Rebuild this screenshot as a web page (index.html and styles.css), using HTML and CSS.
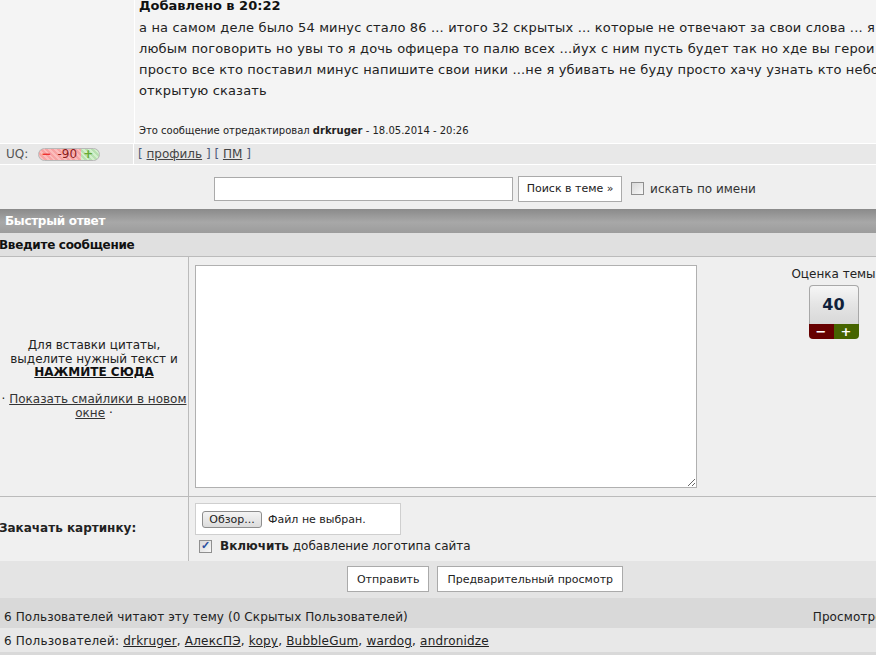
FILE: index.html
```html
<!DOCTYPE html>
<html lang="ru">
<head>
  <meta charset="UTF-8">
  <meta name="viewport" content="width=device-width, initial-scale=1.0">
  <title>Форум — тема</title>
  <link rel="stylesheet" href="styles.css">
</head>
<body>
<div class="page">

  <!-- Last post of the topic -->
  <div class="post">
    <div class="post-side"></div>
    <div class="post-body">
      <div class="post-added">Добавлено в 20:22</div>
      <div class="post-text">
        а на самом деле было 54 минус стало 86 ... итого 32 скрытых ... которые не отвечают за свои слова ... я готова с<br>
        любым поговорить но увы то я дочь офицера то палю всех ...йух с ним пусть будет так но хде вы герои клавиатуры<br>
        просто все кто поставил минус напишите свои ники ...не я убивать не буду просто хачу узнать кто небоится в<br>
        открытую сказать
      </div>
      <div class="post-edit">Это сообщение отредактировал <b>drkruger</b> - 18.05.2014 - 20:26</div>
    </div>
  </div>
  <div class="post-foot">
    <div class="post-side uq-cell">
      UQ:
      <span class="uq"><span class="uq-minus">&minus;</span><span class="uq-val">-90</span><span class="uq-plus">+</span></span>
    </div>
    <div class="post-links"><span>[ <a href="#">профиль</a> ] [ <a href="#">ПМ</a> ]</span></div>
  </div>

  <!-- Search inside topic -->
  <form class="search">
    <input type="text" class="search-input">
    <button type="button" class="btn search-btn">Поиск в теме &raquo;</button>
    <label class="search-check"><input type="checkbox" class="chk"> искать по имени</label>
  </form>

  <!-- Quick reply -->
  <div class="qr">
    <div class="qr-head">Быстрый ответ</div>
    <div class="qr-title">Введите сообщение</div>

    <div class="qr-row">
      <div class="qr-left">
        Для вставки цитаты,<br>
        выделите нужный текст и<br>
        <a href="#" class="quote-link">НАЖМИТЕ СЮДА</a><br><br>
        &middot; <a href="#">Показать смайлики в новом окне</a> &middot;
      </div>
      <div class="qr-main">
        <textarea class="qr-text"></textarea>
        <div class="rate">
          <div class="rate-label">Оценка темы</div>
          <div class="rate-box">
            <div class="rate-num">40</div>
            <div class="rate-btns"><span class="rate-down">&minus;</span><span class="rate-up">+</span></div>
          </div>
        </div>
      </div>
    </div>

    <div class="qr-row upload-row">
      <div class="qr-left upload-label">Закачать картинку:</div>
      <div class="qr-main upload">
        <div class="file-box">
          <span class="file-btn">Обзор...</span>
          <span class="file-name">Файл не выбран.</span>
        </div>
        <label class="logo-check"><input type="checkbox" class="chk" checked> <span><b>Включить</b> добавление логотипа сайта</span></label>
      </div>
    </div>

    <div class="qr-submit">
      <button type="button" class="btn">Отправить</button>
      <button type="button" class="btn">Предварительный просмотр</button>
    </div>
  </div>

  <!-- Who is reading -->
  <div class="stats-head">
    <span>6 Пользователей читают эту тему (0 Скрытых Пользователей)</span>
    <span>Просмотров темы: 2341</span>
  </div>
  <div class="stats-users">
    6 Пользователей: <a href="#">drkruger</a>, <a href="#">АлексПЭ</a>, <a href="#">kopy</a>, <a href="#">BubbleGum</a>, <a href="#">wardog</a>, <a href="#">andronidze</a>
  </div>
  <div class="stats-foot"></div>

</div>
</body>
</html>
```

FILE: styles.css
```css
body {
  margin: 0;
  background: #efefef;
  font-family: "DejaVu Sans", Verdana, sans-serif;
  font-size: 12px;
  color: #222;
  overflow: hidden;
}

a { color: #333; }

.page {
  width: 970px;
  margin-top: -2px;
}

/* old-style checkbox */
.chk {
  appearance: none;
  -webkit-appearance: none;
  position: relative;
  width: 13px;
  height: 13px;
  margin: 0;
  border: 1px solid #8f8f8f;
  background: linear-gradient(135deg, #d8d8d8, #f8f8f8);
  box-sizing: border-box;
  flex-shrink: 0;
}
.chk:checked::after {
  content: "\2713";
  position: absolute;
  left: 1px;
  top: -2px;
  font-size: 11px;
  font-weight: bold;
  color: #2b4fa0;
}

/* ---- post ---- */
.post {
  display: flex;
  background: #f4f4f4;
}
.post-side {
  width: 134px;
  flex-shrink: 0;
  border-right: 1px solid #fff;
}
.post-body {
  padding-left: 4px;
  flex: 1;
}
.post-added {
  font-weight: bold;
  font-size: 13px;
  line-height: 16px;
  color: #111;
}
.post-text {
  margin-top: 3px;
  font-size: 13px;
  line-height: 21px;
  white-space: nowrap;
  letter-spacing: 0.16px;
  color: #222;
}
.post-edit {
  margin-top: 23px;
  font-size: 10px;
  line-height: 14px;
  padding-bottom: 5px;
}

.post-foot {
  display: flex;
  background: #e8e8e8;
  border-top: 1px solid #fff;
  border-bottom: 1px solid #fff;
  height: 20px;
}
.uq-cell {
  display: flex;
  align-items: center;
  padding-left: 6px;
  box-sizing: border-box;
  color: #555;
  font-size: 12px;
}
.uq {
  display: inline-flex;
  align-items: center;
  margin-left: 10px;
  width: 60px;
  height: 11px;
  border: 1px solid #b8b8b8;
  border-radius: 7px;
  background:
    repeating-linear-gradient(45deg, #f7a3a3 0 2px, #fbbcbc 2px 4px) left / 70% 100% no-repeat,
    repeating-linear-gradient(45deg, #b8e0b0 0 2px, #d3f0cc 2px 4px);
  font-size: 12px;
  line-height: 11px;
}
.uq-minus { color: #e33; width: 14px; text-align: center; font-weight: bold; }
.uq-val { color: #8a1c1c; width: 28px; text-align: center; }
.uq-plus { color: #6a3; width: 14px; text-align: center; font-weight: bold; }

.post-links {
  padding-left: 4px;
  display: flex;
  align-items: center;
  color: #4d5a78;
}
.post-links a { color: #444; }

/* ---- search ---- */
.search {
  display: flex;
  justify-content: center;
  align-items: center;
  height: 44px;
  padding-top: 3px;
  box-sizing: border-box;
  margin: 0;
}
.search-input {
  width: 299px;
  height: 24px;
  box-sizing: border-box;
  border: 1px solid #aaa;
  background: #fff;
}
.btn {
  font-family: "DejaVu Sans", Verdana, sans-serif;
  background: #fff;
  border: 1px solid #aaa;
  color: #222;
  height: 26px;
  padding: 0 8px;
  font-size: 11px;
}
.search-btn {
  margin-left: 5px;
  width: 104px;
  padding: 0;
}
.search-check {
  margin-left: 9px;
  display: flex;
  align-items: center;
  gap: 6px;
  font-size: 12px;
  color: #333;
}

/* ---- quick reply ---- */
.qr-head {
  height: 24px;
  line-height: 25px;
  padding-left: 5px;
  background: linear-gradient(#8a8a8a, #a8a8a8 55%, #9c9c9c);
  color: #fff;
  font-weight: bold;
  font-size: 12px;
  letter-spacing: -0.3px;
}
.qr-title {
  height: 23px;
  line-height: 24px;
  margin-left: -1px;
  background: #e0e0e0;
  border-bottom: 1px solid #bbb;
  font-weight: bold;
  font-size: 12px;
  color: #111;
  letter-spacing: -0.3px;
}
.qr-row {
  display: grid;
  grid-template-columns: 189px 1fr;
  border-bottom: 1px solid #bbb;
}
.qr-left {
  border-right: 1px solid #bbb;
  background: #f0f0f0;
  text-align: center;
  line-height: 13.5px;
  padding-top: 82px;
  box-sizing: border-box;
}
.quote-link { color: #111; font-weight: bold; }
.qr-main {
  display: flex;
  background: #efefef;
  padding: 8px 0 8px 6px;
}
.qr-text {
  width: 502px;
  height: 223px;
  box-sizing: border-box;
  border: 1px solid #b0b0b0;
  background: #fff;
  margin: 0;
}
.rate {
  flex: 1;
  display: flex;
  flex-direction: column;
  align-items: center;
  padding-top: 2px;
}
.rate-label { font-size: 12px; line-height: 14px; color: #222; }
.rate-box { margin-top: 4px; width: 50px; }
.rate-num {
  height: 38px;
  line-height: 38px;
  text-align: center;
  border: 1px solid #a8a8a8;
  border-bottom: none;
  border-radius: 4px 4px 0 0;
  background: linear-gradient(#f6f6f6, #e4e4e4 50%, #d8d8d8);
  font-weight: bold;
  font-size: 16px;
  color: #0f1f3a;
}
.rate-btns {
  display: flex;
  height: 15px;
  border-radius: 0 0 4px 4px;
  overflow: hidden;
  color: #fff;
  font-weight: bold;
  font-size: 13px;
  line-height: 15px;
  text-align: center;
}
.rate-down { flex: 1; background: #660000; }
.rate-up { flex: 1; background: #466400; }

/* ---- upload ---- */
.upload-row {
  border-bottom: none;
  height: 64px;
}
.upload-label {
  font-weight: bold;
  text-align: left;
  padding-top: 25px;
  margin-left: -1px;
  font-size: 12px;
}
.upload {
  flex-direction: column;
  padding: 6px 0 0 6px;
}
.file-box {
  width: 206px;
  height: 32px;
  box-sizing: border-box;
  background: #fff;
  border: 1px solid #cfcfcf;
  display: flex;
  align-items: center;
  padding-left: 6px;
}
.file-btn {
  display: inline-block;
  height: 17px;
  line-height: 16px;
  box-sizing: border-box;
  width: 60px;
  text-align: center;
  border: 1px solid #8e8e8e;
  border-radius: 3px;
  background: linear-gradient(#f4f4f4, #dcdcdc);
  font-size: 11px;
}
.file-name { margin-left: 6px; font-size: 11px; }
.logo-check {
  display: flex;
  align-items: center;
  gap: 8px;
  margin-top: 4px;
  margin-left: 4px;
  font-size: 12px;
  color: #222;
}

.qr-submit {
  display: flex;
  justify-content: center;
  gap: 8px;
  background: #e4e4e4;
  padding: 5px 0 6px;
}
.qr-submit .btn { font-size: 11px; padding: 0 9px; }

/* ---- who is reading ---- */
.stats-head {
  display: flex;
  justify-content: space-between;
  background: #d9d9d9;
  height: 30px;
  line-height: 38px;
  padding: 0 4px;
  font-size: 12px;
  letter-spacing: 0.1px;
}
.stats-users {
  background: #e8e8e8;
  height: 24px;
  line-height: 26px;
  padding-left: 4px;
  font-size: 12px;
  letter-spacing: 0.2px;
}
.stats-users a { color: #222; }
.stats-foot { height: 10px; background: #d9d9d9; }
```
